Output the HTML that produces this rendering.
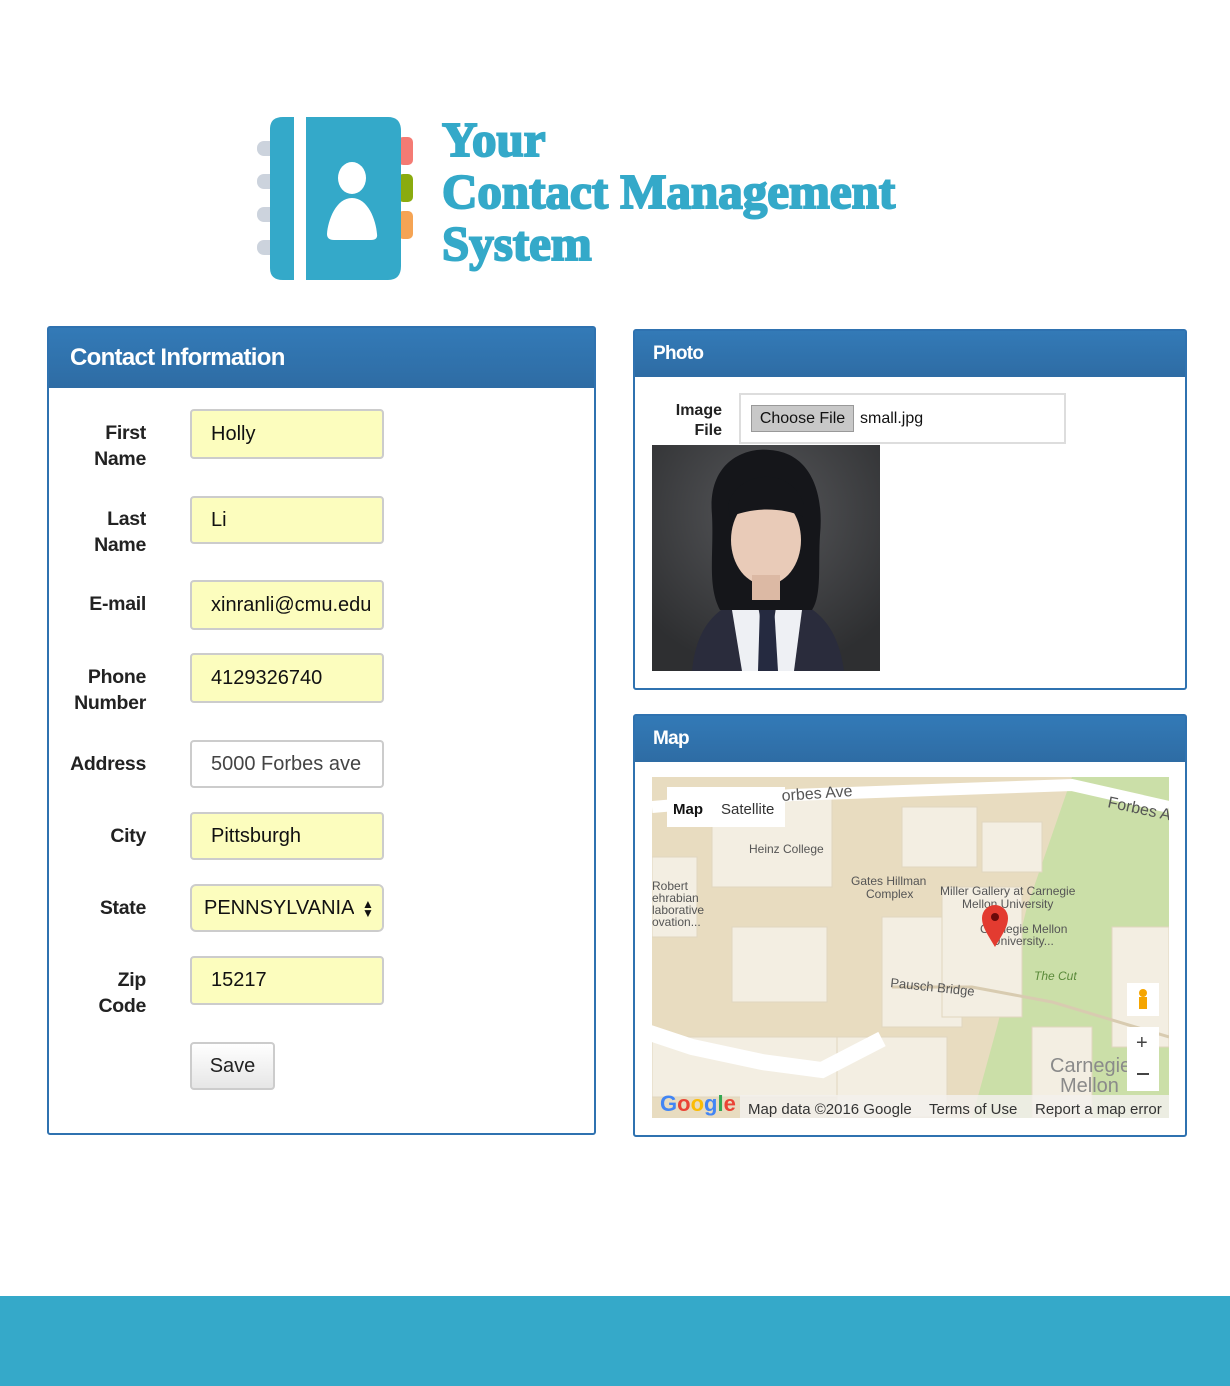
<!DOCTYPE html>
<html><head><meta charset="utf-8"><style>
*{margin:0;padding:0;box-sizing:border-box}
body{width:1230px;height:1386px;background:#fff;position:relative;font-family:"Liberation Sans",Arial,sans-serif;overflow:hidden}
.a{position:absolute}
.panel{position:absolute;border:2px solid #2f72b0;border-radius:3px;background:#fff}
.hd{position:absolute;left:0;right:0;top:0;background:linear-gradient(#337ab7,#2e6ca4);color:#fff;font-weight:bold;letter-spacing:-0.7px}
.lbl{position:absolute;right:1084px;width:110px;text-align:right;font-weight:bold;font-size:19.5px;line-height:26px;color:#222;letter-spacing:-0.3px}
.inp{position:absolute;left:190px;width:194px;background:#fcfdbe;border:2px solid #ccc;border-radius:4px;font-size:20px;color:#111;padding-left:19px;display:flex;align-items:center}
.logoT{position:absolute;left:442px;font-family:"Liberation Serif",serif;font-weight:bold;color:#34a9c9;font-size:49px;line-height:52px;transform-origin:left top;white-space:nowrap;letter-spacing:0;-webkit-text-stroke:2px #34a9c9}
</style></head><body>
<svg class="a" style="left:250px;top:110px" width="170" height="180" viewBox="250 110 170 180">
<g fill="#ccd3dd"><rect x="257" y="141" width="22" height="15" rx="7"/><rect x="257" y="174" width="22" height="15" rx="7"/><rect x="257" y="207" width="22" height="15" rx="7"/><rect x="257" y="240" width="22" height="15" rx="7"/></g>
<rect x="398" y="137" width="15" height="28" rx="5" fill="#f47b74"/>
<rect x="398" y="174" width="15" height="28" rx="5" fill="#8aab0f"/>
<rect x="398" y="211" width="15" height="28" rx="5" fill="#f5a454"/>
<path d="M283 117 H294 V280 H283 Q270 280 270 268 V129 Q270 117 283 117Z" fill="#34a9c9"/>
<path d="M306 117 H388 Q401 117 401 131 V266 Q401 280 388 280 H306Z" fill="#34a9c9"/>
<ellipse cx="352" cy="178" rx="14" ry="16" fill="#fff"/>
<path d="M352 198 C336 198 328 220 327 234 Q327 240 334 240 H371 Q378 240 377 234 C376 220 368 198 352 198Z" fill="#fff"/>
</svg>
<div class="logoT" style="top:114px">Your</div>
<div class="logoT" style="top:166px">Contact Management</div>
<div class="logoT" style="top:218px">System</div>

<div class="panel" style="left:47px;top:326px;width:549px;height:809px">
<div class="hd" style="height:60px;font-size:24px;padding:16px 0 0 21px">Contact Information</div>
</div>
<div class="lbl" style="top:420px">First<br>Name</div>
<div class="inp" style="top:409px;height:50px">Holly</div>
<div class="lbl" style="top:506px">Last<br>Name</div>
<div class="inp" style="top:496px;height:48px">Li</div>
<div class="lbl" style="top:591px">E-mail</div>
<div class="inp" style="top:580px;height:50px;overflow:hidden;white-space:nowrap">xinranli@cmu.edu</div>
<div class="lbl" style="top:664px">Phone<br>Number</div>
<div class="inp" style="top:653px;height:50px">4129326740</div>
<div class="lbl" style="top:751px">Address</div>
<div class="inp" style="top:740px;height:48px;background:#fff;color:#444">5000 Forbes ave</div>
<div class="lbl" style="top:823px">City</div>
<div class="inp" style="top:812px;height:48px">Pittsburgh</div>
<div class="lbl" style="top:895px">State</div>
<div class="inp" style="top:884px;height:48px;padding-left:12px;font-size:20px;border-radius:6px;white-space:nowrap;overflow:hidden">PENNSYLVANIA<span style="position:absolute;right:0;top:0;bottom:0;width:28px;background:#fcfdbe;font-size:12px;line-height:9px;text-align:center;padding-top:14px">▲<br>▼</span></div>
<div class="lbl" style="top:967px">Zip<br>Code</div>
<div class="inp" style="top:956px;height:49px">15217</div>
<div class="a" style="left:190px;top:1042px;width:85px;height:48px;border:2px solid #ccc;border-radius:4px;background:linear-gradient(#fff,#e6e6e6);font-size:20px;text-align:center;line-height:44px;color:#222">Save</div>

<div class="panel" style="left:633px;top:329px;width:554px;height:361px">
<div class="hd" style="height:46px;font-size:19px;padding:12px 0 0 18px">Photo</div>
</div>
<div class="a" style="left:660px;top:401px;width:62px;text-align:right;font-weight:bold;font-size:16px;line-height:20px;color:#222">Image<br>File</div>
<div class="a" style="left:739px;top:393px;width:327px;height:51px;border:2px solid #ddd"></div>
<div class="a" style="left:751px;top:405px;width:103px;height:27px;background:#c8c8c8;border:1px solid #999;font-size:16px;line-height:25px;text-align:center;color:#111">Choose File</div>
<div class="a" style="left:860px;top:410px;font-size:16px;color:#111">small.jpg</div>
<svg class="a" style="left:652px;top:445px" width="228" height="226" viewBox="0 0 228 226">
<defs><radialGradient id="g" cx="0.5" cy="0.3" r="0.7"><stop offset="0" stop-color="#56575a"/><stop offset="1" stop-color="#2e2f31"/></radialGradient></defs>
<rect width="228" height="226" fill="url(#g)"/>
<path d="M40 226 C45 175 70 160 100 150 L130 150 C160 160 185 175 192 226Z" fill="#2a2c3c"/>
<path d="M80 165 L104 150 L118 226 L90 226Z" fill="#eef0f4"/>
<path d="M150 165 L126 150 L114 226 L142 226Z" fill="#eef0f4"/>
<path d="M108 160 L122 160 L126 226 L106 226Z" fill="#252a40"/>
<path d="M60 70 C55 15 95 2 118 5 C160 8 172 50 168 90 C166 120 170 150 160 165 L68 165 C55 140 62 110 60 70Z" fill="#15161a"/>
<ellipse cx="114" cy="95" rx="35" ry="45" fill="#e9cbb8"/>
<path d="M76 60 C85 25 140 20 152 60 L152 72 C130 62 100 62 78 72Z" fill="#15161a"/>
<rect x="100" y="130" width="28" height="25" fill="#dcb9a4"/>
</svg>

<div class="panel" style="left:633px;top:714px;width:554px;height:423px">
<div class="hd" style="height:46px;font-size:19px;padding:12px 0 0 18px">Map</div>
</div>
<svg class="a" style="left:652px;top:777px" width="517" height="341" viewBox="0 0 517 341" font-family="Liberation Sans, sans-serif">
<rect width="517" height="341" fill="#e8dcc0"/>
<path d="M420 0 L517 0 L517 341 L320 341 L345 250 L375 130 Z" fill="#cbdfa8"/>
<g fill="#f3eee2" stroke="#e0d6bf">
<rect x="60" y="20" width="120" height="90"/><rect x="250" y="30" width="75" height="60"/><rect x="330" y="45" width="60" height="50"/>
<rect x="80" y="150" width="95" height="75"/><rect x="0" y="260" width="210" height="60"/><rect x="185" y="260" width="110" height="80"/>
<rect x="230" y="140" width="80" height="110"/><rect x="290" y="110" width="80" height="130"/><rect x="460" y="150" width="57" height="120"/>
<rect x="0" y="80" width="45" height="80"/><rect x="380" y="250" width="60" height="91"/>
</g>
<path d="M0 30 L140 18 L420 8 L517 30" stroke="#fff" stroke-width="12" fill="none"/>
<path d="M-5 255 L40 270 L110 285 L170 293 L230 262" stroke="#fff" stroke-width="16" fill="none"/>
<path d="M240 210 L320 210 L400 225 L517 260" stroke="#d8cbb0" stroke-width="3" fill="none"/>
<rect x="15" y="10" width="118" height="40" fill="#fff"/>
<text x="21" y="37" font-size="15" font-weight="bold" fill="#111">Map</text>
<text x="69" y="37" font-size="15" fill="#333">Satellite</text>
<text x="130" y="24" font-size="16" fill="#555" transform="rotate(-4 130 24)">orbes Ave</text>
<text x="455" y="30" font-size="16" fill="#555" transform="rotate(12 455 30)">Forbes A</text>
<text x="97" y="76" font-size="12" fill="#555">Heinz College</text>
<text x="0" y="113" font-size="12" fill="#555">Robert</text><text x="0" y="125" font-size="12" fill="#555">ehrabian</text><text x="0" y="137" font-size="12" fill="#555">laborative</text><text x="0" y="149" font-size="12" fill="#555">ovation...</text>
<text x="199" y="108" font-size="12" fill="#555">Gates Hillman</text><text x="214" y="121" font-size="12" fill="#555">Complex</text>
<text x="288" y="118" font-size="12" fill="#555">Miller Gallery at Carnegie</text><text x="310" y="131" font-size="12" fill="#555">Mellon University</text>
<text x="328" y="156" font-size="12" fill="#555">Carnegie Mellon</text><text x="340" y="168" font-size="12" fill="#555">University...</text>
<text x="382" y="203" font-size="12" font-style="italic" fill="#5a8a3a">The Cut</text>
<text x="238" y="210" font-size="13" fill="#555" transform="rotate(6 238 210)">Pausch Bridge</text>
<text x="398" y="295" font-size="20" fill="#8a8a8a">Carnegie</text><text x="408" y="315" font-size="20" fill="#8a8a8a">Mellon</text>
<path d="M343 170 C336 158 330 150 330 141 A13 13 0 0 1 356 141 C356 150 350 158 343 170Z" fill="#e33b30"/>
<circle cx="343" cy="140" r="4" fill="#6a0a0a"/>
<rect x="475" y="206" width="32" height="33" fill="#fff"/><circle cx="491" cy="216" r="4" fill="#f5a500"/><rect x="487" y="220" width="8" height="12" fill="#f5a500"/>
<rect x="475" y="250" width="32" height="64" fill="#fff"/><text x="484" y="272" font-size="20" fill="#444">+</text><rect x="485" y="296" width="12" height="2" fill="#444"/>
<rect x="88" y="318" width="429" height="23" fill="#f2f0ec" opacity="0.85"/>
<text x="8" y="334" font-size="22" font-weight="bold"><tspan fill="#4285f4">G</tspan><tspan fill="#ea4335">o</tspan><tspan fill="#fbbc05">o</tspan><tspan fill="#4285f4">g</tspan><tspan fill="#34a853">l</tspan><tspan fill="#ea4335">e</tspan></text>
<text x="96" y="337" font-size="15" fill="#333">Map data ©2016 Google</text>
<text x="277" y="337" font-size="15" fill="#333">Terms of Use</text>
<text x="383" y="337" font-size="15" fill="#333">Report a map error</text>
</svg>

<div class="a" style="left:0;top:1296px;width:1230px;height:90px;background:#35a9c9"></div>
</body></html>
